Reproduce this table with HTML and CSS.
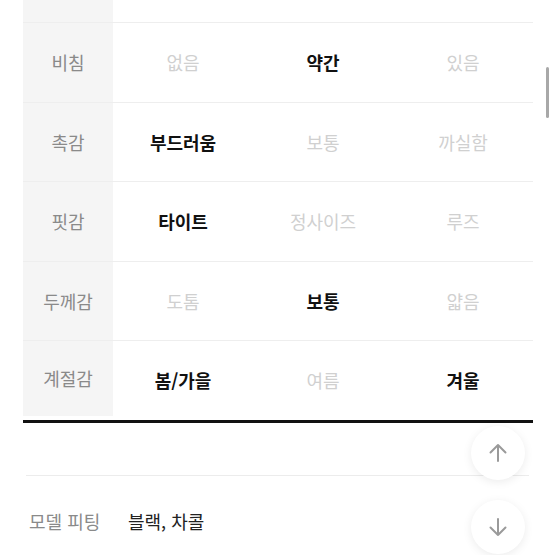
FILE: index.html
```html
<!DOCTYPE html>
<html lang="ko">
<head>
<meta charset="utf-8">
<link rel="stylesheet" href="styles.css">
</head>
<body>
<div class="page">
  <div class="table">
    <div class="row partial"><div class="label"></div><div class="cells"></div></div>
    <div class="row">
      <div class="label">비침</div>
      <div class="cells"><span class="off">없음</span><span class="on">약간</span><span class="off">있음</span></div>
    </div>
    <div class="row">
      <div class="label">촉감</div>
      <div class="cells"><span class="on">부드러움</span><span class="off">보통</span><span class="off">까실함</span></div>
    </div>
    <div class="row">
      <div class="label">핏감</div>
      <div class="cells"><span class="on">타이트</span><span class="off">정사이즈</span><span class="off">루즈</span></div>
    </div>
    <div class="row">
      <div class="label">두께감</div>
      <div class="cells"><span class="off">도톰</span><span class="on">보통</span><span class="off">얇음</span></div>
    </div>
    <div class="row last">
      <div class="label">계절감</div>
      <div class="cells"><span class="on">봄/가을</span><span class="off">여름</span><span class="on">겨울</span></div>
    </div>
  </div>
  <div class="spacer"></div>
  <div class="info">
    <span class="info-label">모델 피팅</span>
    <span class="info-value">블랙, 차콜</span>
  </div>
</div>
<div class="scrollbar"></div>
<button class="fab up" aria-label="위로">
  <svg width="22" height="22" viewBox="0 0 22 22" fill="none" stroke="#9a9a9a" stroke-width="2" stroke-linecap="round" stroke-linejoin="round"><path d="M11 19V3M3.5 10.5L11 3l7.5 7.5"/></svg>
</button>
<button class="fab down" aria-label="아래로">
  <svg width="22" height="22" viewBox="0 0 22 22" fill="none" stroke="#9a9a9a" stroke-width="2" stroke-linecap="round" stroke-linejoin="round"><path d="M11 3v16M3.5 11.5L11 19l7.5-7.5"/></svg>
</button>
</body>
</html>
```

FILE: styles.css
```css
html, body {
  margin: 0;
  padding: 0;
  background: #fff;
  overflow: hidden;
}
body {
  font-family: "Noto Sans CJK KR", "Noto Sans", sans-serif;
  width: 555px;
  height: 555px;
  position: relative;
}
.page {
  padding: 0 22px 0 23px;
}
.table {
  border-bottom: 3px solid #111;
}
.row {
  display: flex;
  height: 79.5px;
  box-sizing: border-box;
  border-top: 1px solid #eeeeee;
}
.row.partial {
  height: 22px;
  border-top: none;
}
.row.last {
  height: 79.5px;
}
.label {
  width: 90px;
  flex: none;
  background: #f5f5f5;
  color: #8a8a8a;
  font-size: 18px;
  display: flex;
  align-items: center;
  justify-content: center;
}
.row.last .label {
  margin-bottom: 4px;
}
.cells {
  flex: 1;
  display: grid;
  grid-template-columns: repeat(3, 1fr);
  align-items: center;
  font-size: 18px;
  text-align: center;
}
.cells .on {
  color: #111;
  font-weight: 700;
}
.cells .off {
  color: #d0d0d0;
}
.spacer {
  height: 52px;
  border-bottom: 1px solid #ececec;
  margin-left: 3px;
  margin-right: 4px;
}
.info {
  display: flex;
  align-items: center;
  height: 90px;
  padding-left: 6px;
  font-size: 18px;
}
.info-label {
  color: #8a8a8a;
  width: 99px;
}
.info-value {
  color: #222;
}
.scrollbar {
  position: absolute;
  left: 546px;
  top: 67px;
  width: 3px;
  height: 51px;
  border-radius: 2px;
  background: #a8a8a8;
}
.fab {
  position: absolute;
  left: 471px;
  width: 54px;
  height: 54px;
  border-radius: 50%;
  border: none;
  background: #fff;
  box-shadow: 0 2px 10px rgba(0, 0, 0, 0.08);
  display: flex;
  align-items: center;
  justify-content: center;
  padding: 0;
}
.fab.up {
  top: 426px;
}
.fab.down {
  top: 500px;
}
```
